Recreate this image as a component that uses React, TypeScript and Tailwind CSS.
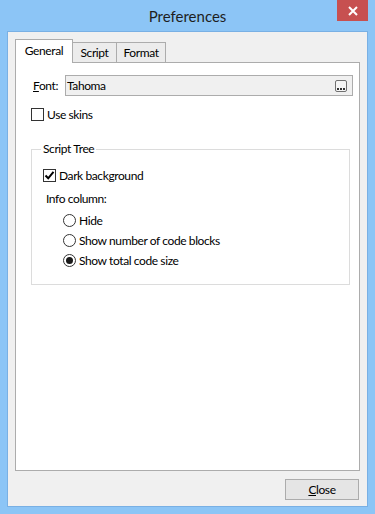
import { useState } from 'react';

const Checkbox = ({ checked }: { checked: boolean }) => (
  <span className="w-[13px] h-[13px] border border-[#333333] bg-white flex items-center justify-center shrink-0">
    {checked && (
      <svg width="11" height="11" viewBox="0 0 11 11">
        <path d="M1.5 5.5 L4.2 8.3 L9.5 1.8" fill="none" stroke="#000" strokeWidth="2" />
      </svg>
    )}
  </span>
);

const Radio = ({ checked }: { checked: boolean }) => (
  <span className="w-[13px] h-[13px] rounded-full border border-[#333333] bg-white flex items-center justify-center shrink-0">
    {checked && <span className="w-[7px] h-[7px] rounded-full bg-[#1a1a1a]" />}
  </span>
);

const Preferences = () => {
  const [infoColumn, setInfoColumn] = useState('size');
  const [darkBg, setDarkBg] = useState(true);
  const [skins, setSkins] = useState(false);

  const options = [
    { id: 'hide', label: 'Hide' },
    { id: 'blocks', label: 'Show number of code blocks' },
    { id: 'size', label: 'Show total code size' },
  ];

  return (
    <div className="w-[375px] h-[514px] bg-[#8cc5f6] flex flex-col font-['Lato',sans-serif] text-[12px] leading-[15px] tracking-[-0.4px] text-black">
      {/* title bar */}
      <div className="h-[31px] relative flex items-center justify-center shrink-0">
        <span className="text-[15px] leading-[18px] tracking-normal text-[#1e1e1e] mt-[1px]">Preferences</span>
        <div className="absolute top-0 right-[7px] w-[31px] h-[21px] bg-[#c75050] flex items-center justify-center">
          <svg width="10" height="10" viewBox="0 0 10 10">
            <path d="M1 1 L9 9 M9 1 L1 9" stroke="#fff" strokeWidth="2" />
          </svg>
        </div>
      </div>

      {/* client area */}
      <div className="flex-1 mx-[7px] mb-[7px] border border-[#79b0e4] bg-[#f0f0f0] flex flex-col px-[7px] pt-[7px]">
        {/* tabs */}
        <div className="flex items-end h-[23px] relative z-10">
          <div className="h-[24px] mb-[-1px] w-[58px] bg-white border border-b-0 border-[#acacac] flex items-center justify-center pb-[3px]">
            General
          </div>
          <div className="h-[20px] w-[44px] bg-[#ececec] border border-l-0 border-b-0 border-[#acacac] flex items-center justify-center">
            Script
          </div>
          <div className="h-[20px] w-[49px] bg-[#ececec] border border-l-0 border-b-0 border-[#acacac] flex items-center justify-center">
            Format
          </div>
        </div>

        {/* tab panel */}
        <div className="h-[409px] bg-white border border-[#acacac] flex flex-col pt-[12px] pl-[17px] pr-[6px]">
          <div className="flex items-center">
            <span className="w-[32px]">
              <u>F</u>ont:
            </span>
            <div className="flex-1 h-[21px] bg-[#f0f0f0] border border-[#acacac] flex items-center pl-[1px] pr-[5px]">
              <span className="flex-1">Tahoma</span>
              <span className="w-[12px] h-[12px] border border-[#707070] rounded-[2px] bg-[#f5f5f5] flex items-end justify-center pb-[1px] gap-[1px]">
                <span className="w-[2px] h-[2px] bg-[#333]" />
                <span className="w-[2px] h-[2px] bg-[#333]" />
                <span className="w-[2px] h-[2px] bg-[#333]" />
              </span>
            </div>
          </div>

          <label className="flex items-center gap-[3px] h-[15px] mt-[11px] ml-[-2px]" onClick={() => setSkins(!skins)}>
            <Checkbox checked={skins} />
            <span>Use skins</span>
          </label>

          <fieldset className="mt-[20px] ml-[-2px] mr-[3px] h-[143px] border border-[#dcdcdc] px-[11px]">
            <legend className="ml-[-2px] px-[2px] leading-[14px]">Script Tree</legend>
            <label className="flex items-center gap-[3px] h-[15px] mt-[12px]" onClick={() => setDarkBg(!darkBg)}>
              <Checkbox checked={darkBg} />
              <span>Dark background</span>
            </label>
            <div className="mt-[8px] ml-[3px]">Info column:</div>
            <div className="flex flex-col gap-[3px] mt-[6px] ml-[20px]">
              {options.map((o) => (
                <label key={o.id} className="flex items-center gap-[3px] h-[17px]" onClick={() => setInfoColumn(o.id)}>
                  <Radio checked={infoColumn === o.id} />
                  <span>{o.label}</span>
                </label>
              ))}
            </div>
          </fieldset>
        </div>

        {/* buttons */}
        <div className="flex justify-end mt-[8px] pr-[1px]">
          <button className="w-[74px] h-[21px] border border-[#acacac] bg-[#e5e5e5] flex items-center justify-center">
            <span>
              <u>C</u>lose
            </span>
          </button>
        </div>
      </div>
    </div>
  );
};

export default Preferences;
